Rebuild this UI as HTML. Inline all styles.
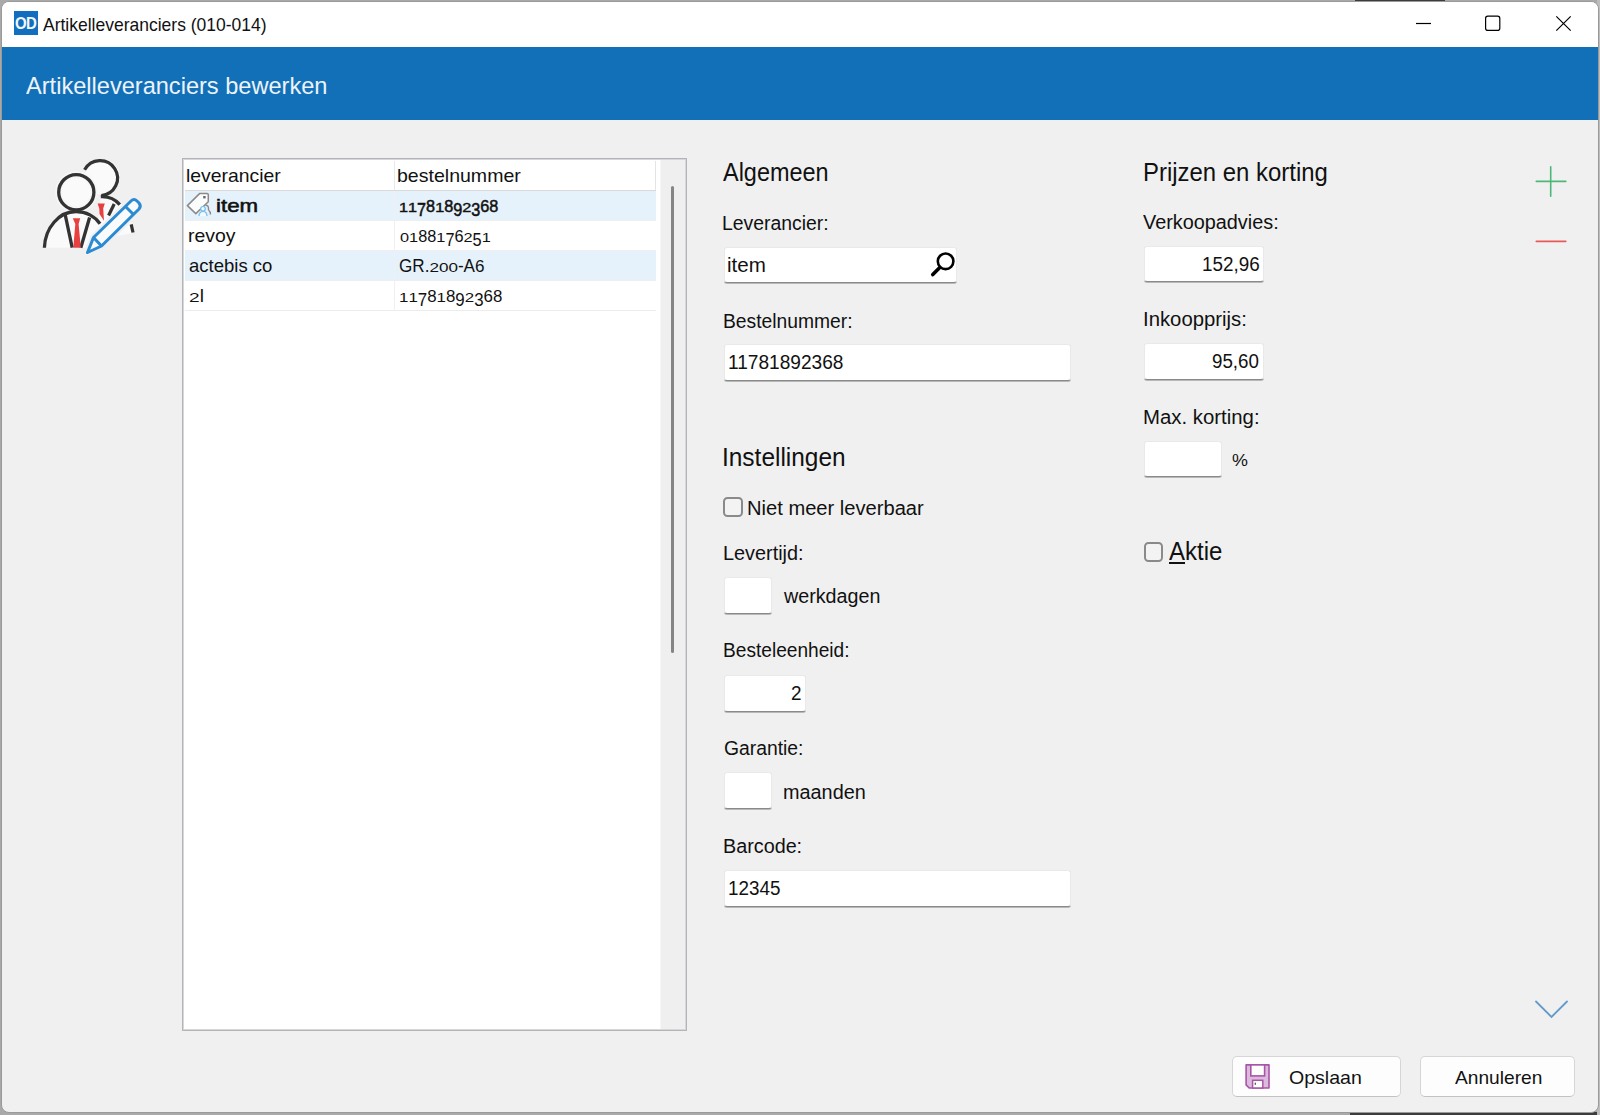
<!DOCTYPE html>
<html><head><meta charset="utf-8"><style>
html,body{margin:0;padding:0;width:1600px;height:1115px;overflow:hidden;background:#a9a9a9;}
*{box-sizing:border-box;}
.t{position:absolute;white-space:nowrap;font-family:'Liberation Sans', sans-serif;transform-origin:0 0;}
.win{position:absolute;left:1px;top:1px;width:1598px;height:1112px;border-radius:8px;background:#f0f0f0;border:1px solid #9a9a9a;overflow:hidden;}
.bar{position:absolute;left:0;top:0;width:100%;height:45px;background:#fff;}
.band{position:absolute;left:0;top:45px;width:100%;height:73px;background:#1270b8;}
.inp{position:absolute;background:#fff;border-radius:3px;border:1px solid #e9e9e9;border-bottom:1px solid #8a8a8a;box-shadow:0 1px 0 #b8b8b8;}
.cb{position:absolute;width:19.5px;height:19.5px;border:2px solid #8a8a8a;border-radius:4.5px;background:#f3f3f3;}
.btn{position:absolute;background:#fdfdfd;border:1px solid #d6d6d6;border-bottom-color:#c2c2c2;border-radius:5px;}
</style></head><body>
<!-- desktop bits -->
<div style="position:absolute;left:1355px;top:0;width:90px;height:2px;background:#3c3c3c"></div>
<div style="position:absolute;left:1350px;top:1112px;width:250px;height:3px;background:#3c3c3c"></div>
<div style="position:absolute;left:1597px;top:0;width:3px;height:1115px;background:#bdbdbd"></div>
<div class="win">
 <div class="bar"></div>
 <div class="band"></div>
</div>
<!-- app icon -->
<div style="position:absolute;left:14px;top:11px;width:24px;height:24px;background:#126fbf;"></div>
<div class="t" style="left:14.6px;top:15.4px;font-size:17px;line-height:18px;font-weight:bold;color:#f4f8fc;letter-spacing:-0.8px;transform:scaleX(0.88)">OD</div>
<!-- window controls -->
<svg style="position:absolute;left:0;top:0" width="1600" height="60">
 <line x1="1416" y1="23.5" x2="1431" y2="23.5" stroke="#000" stroke-width="1.2"/>
 <rect x="1485.6" y="16.2" width="14.2" height="14.2" rx="2.2" fill="none" stroke="#000" stroke-width="1.2"/>
 <path d="M1556.3 16.3 L1570.7 30.7 M1570.7 16.3 L1556.3 30.7" stroke="#000" stroke-width="1.2"/>
</svg>
<!-- big icon -->
<svg style="position:absolute;left:0;top:130px" width="180" height="140" viewBox="0 130 180 140">
 <circle cx="102.5" cy="177" r="17.5" fill="#fafafa"/>
 <path d="M101 196.5 C113 196.5 124 203 129 213 L133.5 233 L96 240 Z" fill="#fafafa"/>
 <g fill="none" stroke="#333" stroke-width="3.2">
  <path d="M84.6 169.8 A17.5 17.5 0 1 1 101.3 195.5"/>
  <path d="M100.8 196.6 C108 196.3 115.5 199.5 119.8 204.6"/>
  <path d="M114.2 204 L108.6 215.5"/>
  <path d="M131.2 224.3 L133 232.5"/>
 </g>
 <path d="M97.6 203.5 L104.8 203.5 L103.2 208.5 L104 220.8 L99.5 214 L99.3 208.5 Z" fill="#e84040"/>
 <circle cx="76.3" cy="192.2" r="17.6" fill="#fafafa" stroke="#f6f6f6" stroke-width="7"/>
 <path d="M44.4 247.7 C45 228 59 211.5 76 211.5 C86 211.5 95 216.5 100 223.8 L104 247.7 Z" fill="#fafafa"/>
 <g fill="none" stroke="#333" stroke-width="3.3">
  <circle cx="76.3" cy="192.2" r="17.6"/>
  <path d="M44.4 247.7 C45 228 59 211.5 76 211.5 C86 211.5 95 216.5 100 223.8"/>
  <path d="M64.8 212.8 L72.2 247.7 M89.6 217.5 L80.8 247.7"/>
 </g>
 <path d="M72.8 218.2 L80.2 218.2 L78.6 224 L80.8 247.7 L73.3 247.7 L75.3 224 Z" fill="#e84040"/>
 <path d="M87.5 252.5 L93.5 237.5 L131 201 Q134 198 137 201 L139 203 Q141.5 206 139 209 L101.5 246 Z" fill="none" stroke="#f0f0f0" stroke-width="7" stroke-linejoin="round"/>
 <g fill="#f8fafc" stroke="#2a8ad2" stroke-width="3" stroke-linejoin="round">
  <path d="M87.5 252.5 L93.5 237.5 L131 201 Q134 198 137 201 L139 203 Q141.5 206 139 209 L101.5 246 Z"/>
  <path d="M93.5 237.5 L101.5 246 M125.5 206.5 L133.5 214.5" fill="none"/>
 </g>
</svg>
<!-- list box -->
<div style="position:absolute;left:182px;top:158px;width:505px;height:873px;border:1px solid #b3b4b8;box-shadow:inset 0 0 0 1px #d6d7da;background:#fff"></div>
<div style="position:absolute;left:660px;top:160px;width:25px;height:869px;background:#efefef;border-left:1px solid #f7f7f7"></div>
<div style="position:absolute;left:671px;top:186px;width:3px;height:467px;background:#858585;border-radius:1.5px"></div>
<div style="position:absolute;left:185px;top:161px;width:471px;height:29px;background:#fff;border-right:1px solid #e4e4e4"></div>
<div style="position:absolute;left:394px;top:161px;width:1px;height:149px;background:#e8e8e8"></div>
<div style="position:absolute;left:185px;top:190px;width:471px;height:1px;background:#dadada"></div>
<div style="position:absolute;left:185px;top:191px;width:471px;height:29px;background:#e5f1fb"></div>
<div style="position:absolute;left:185px;top:220px;width:471px;height:1px;background:#efefef"></div>
<div style="position:absolute;left:185px;top:250px;width:471px;height:1px;background:#efefef"></div>
<div style="position:absolute;left:185px;top:251px;width:471px;height:29px;background:#e5f1fb"></div>
<div style="position:absolute;left:185px;top:280px;width:471px;height:1px;background:#efefef"></div>
<div style="position:absolute;left:185px;top:310px;width:471px;height:1px;background:#ececec"></div>
<div style="position:absolute;left:394px;top:191px;width:1px;height:119px;background:#f0f0f0"></div>
<!-- tag icon -->
<svg style="position:absolute;left:184px;top:190px" width="30" height="30" viewBox="184 190 30 30">
 <path d="M187.4 205.6 L199.8 193.4 L207 193.4 Q208.3 193.4 208.3 194.7 L208.3 201.8 L195.8 213.6 Z" fill="#fcfcfc" stroke="#8a8a8a" stroke-width="1.5" stroke-linejoin="round"/>
 <rect x="203.2" y="196" width="2.4" height="2.4" fill="#666"/>
 <path d="M205.5 205.2 Q208.5 205 208.5 208.5 L208.5 210 M208.5 210 Q210.5 211.5 210.5 214.5" fill="none" stroke="#8a8a8a" stroke-width="1.4"/>
 <circle cx="203" cy="208.8" r="2.3" fill="#f4f9fe" stroke="#74bdec" stroke-width="1.2"/>
 <path d="M199 216 Q199.3 211.5 203 211.5 Q206.7 211.5 207 216" fill="#f4f9fe" stroke="#74bdec" stroke-width="1.2"/>
</svg>
<!-- inputs -->
<div class="inp" style="left:723.5px;top:246.5px;width:233.0px;height:36.5px"></div>
<svg style="position:absolute;left:925px;top:248px" width="32" height="32" viewBox="925 248 32 32">
 <circle cx="945.6" cy="261.3" r="7.8" fill="none" stroke="#000" stroke-width="2.6"/>
 <path d="M939.8 267.5 L932.8 274.6" stroke="#000" stroke-width="3.6" stroke-linecap="round"/>
</svg>
<div class="inp" style="left:723.5px;top:344.0px;width:347.0px;height:37.0px"></div>
<div class="cb" style="left:723.3px;top:497px"></div>
<div class="inp" style="left:723.5px;top:576.5px;width:48.0px;height:37.0px"></div>
<div class="inp" style="left:723.5px;top:674.5px;width:82.5px;height:37.0px"></div>
<div class="inp" style="left:723.5px;top:771.5px;width:48.0px;height:37.5px"></div>
<div class="inp" style="left:723.5px;top:870.0px;width:347.0px;height:36.5px"></div>
<div class="inp" style="left:1143.5px;top:245.5px;width:120.0px;height:36.5px"></div>
<div class="inp" style="left:1143.5px;top:342.5px;width:120.0px;height:37.0px"></div>
<div class="inp" style="left:1143.5px;top:440.5px;width:78.0px;height:36.5px"></div>
<div class="cb" style="left:1143.5px;top:542px"></div>
<!-- plus/minus/chevron -->
<svg style="position:absolute;left:1520px;top:150px" width="60" height="110" viewBox="1520 150 60 110">
 <path d="M1536.3 181.4 L1565.8 181.4 M1550.7 166.8 L1550.7 196.3" stroke="#4ab878" stroke-width="1.6" stroke-linecap="round"/>
 <path d="M1536.3 241.4 L1565.8 241.4" stroke="#e85a5a" stroke-width="1.6" stroke-linecap="round"/>
</svg>
<svg style="position:absolute;left:1525px;top:990px" width="50" height="40" viewBox="1525 990 50 40">
 <path d="M1536 1001.5 L1551.5 1017 L1567 1001.5" fill="none" stroke="#639bcb" stroke-width="1.8" stroke-linecap="round"/>
</svg>
<!-- buttons -->
<div class="btn" style="left:1231.5px;top:1056px;width:169px;height:41px"></div>
<div class="btn" style="left:1420px;top:1056px;width:155px;height:41px"></div>
<svg style="position:absolute;left:1240px;top:1060px" width="34" height="34" viewBox="1240 1060 34 34">
 <path d="M1246.1 1064.9 L1269 1064.9 L1269 1088 L1249.2 1088 L1246.1 1084.9 Z" fill="#dcbadc" stroke="#a855a8" stroke-width="1.6" stroke-linejoin="round"/>
 <rect x="1250.8" y="1064.9" width="13.8" height="11" fill="#fdfffd" stroke="#a855a8" stroke-width="1.6"/>
 <rect x="1252.6" y="1080.3" width="10.2" height="7.7" fill="#fdfffd" stroke="#a855a8" stroke-width="1.5"/>
 <ellipse cx="1255.3" cy="1083.7" rx="0.7" ry="1.2" fill="#555"/>
</svg>
<div class="t" id="t_title" style="left:43.00px;top:13.25px;font-size:19px;line-height:23px;font-weight:normal;color:#111;transform:scaleX(0.9206)">Artikelleveranciers (010-014)</div>
<div class="t" id="t_head" style="left:26.00px;top:71.00px;font-size:24.5px;line-height:29px;font-weight:normal;color:#edf3f9;transform:scaleX(0.9626)">Artikelleveranciers bewerken</div>
<div class="t" id="t_lh1" style="left:186.24px;top:164.00px;font-size:18.5px;line-height:23px;font-weight:normal;color:#111;transform:scaleX(1.0473)">leverancier</div>
<div class="t" id="t_lh2" style="left:396.63px;top:163.80px;font-size:18.5px;line-height:23px;font-weight:normal;color:#111;transform:scaleX(1.0560)">bestelnummer</div>
<div class="t" id="t_r1a" style="left:216.44px;top:194.00px;font-size:18.5px;line-height:23px;font-weight:normal;color:#111;transform:scaleX(1.2046);-webkit-text-stroke:0.55px #111">item</div>
<div class="t" id="t_r1b" style="left:398.50px;top:193.70px;font-size:18.5px;line-height:23px;font-weight:normal;color:#111;transform:scaleX(0.8775);-webkit-text-stroke:0.55px #111"><span style="display:inline-block;transform-origin:50% 18.00px;transform:scaleY(0.68)">1</span><span style="display:inline-block;transform-origin:50% 18.00px;transform:scaleY(0.68)">1</span><span style="display:inline-block;transform-origin:50% 18.00px;transform:translateY(4.2px) scaleY(0.97)">7</span><span style="display:inline-block;transform-origin:50% 18.00px;transform:scaleY(0.93)">8</span><span style="display:inline-block;transform-origin:50% 18.00px;transform:scaleY(0.68)">1</span><span style="display:inline-block;transform-origin:50% 18.00px;transform:scaleY(0.93)">8</span><span style="display:inline-block;transform-origin:50% 18.00px;transform:translateY(4.2px) scaleY(0.97)">9</span><span style="display:inline-block;transform-origin:50% 18.00px;transform:scaleY(0.68)">2</span><span style="display:inline-block;transform-origin:50% 18.00px;transform:translateY(4.2px) scaleY(0.97)">3</span><span style="display:inline-block;transform-origin:50% 18.00px;transform:scaleY(0.93)">6</span><span style="display:inline-block;transform-origin:50% 18.00px;transform:scaleY(0.93)">8</span></div>
<div class="t" id="t_r2a" style="left:188.44px;top:224.20px;font-size:18.5px;line-height:23px;font-weight:normal;color:#111;transform:scaleX(1.0492)">revoy</div>
<div class="t" id="t_r2b" style="left:399.95px;top:223.50px;font-size:18.5px;line-height:23px;font-weight:normal;color:#111;transform:scaleX(0.8815)"><span style="display:inline-block;transform-origin:50% 18.00px;transform:scaleY(0.68)">0</span><span style="display:inline-block;transform-origin:50% 18.00px;transform:scaleY(0.68)">1</span><span style="display:inline-block;transform-origin:50% 18.00px;transform:scaleY(0.93)">8</span><span style="display:inline-block;transform-origin:50% 18.00px;transform:scaleY(0.93)">8</span><span style="display:inline-block;transform-origin:50% 18.00px;transform:scaleY(0.68)">1</span><span style="display:inline-block;transform-origin:50% 18.00px;transform:translateY(4.2px) scaleY(0.97)">7</span><span style="display:inline-block;transform-origin:50% 18.00px;transform:scaleY(0.93)">6</span><span style="display:inline-block;transform-origin:50% 18.00px;transform:scaleY(0.68)">2</span><span style="display:inline-block;transform-origin:50% 18.00px;transform:translateY(4.2px) scaleY(0.97)">5</span><span style="display:inline-block;transform-origin:50% 18.00px;transform:scaleY(0.68)">1</span></div>
<div class="t" id="t_r3a" style="left:189.06px;top:253.60px;font-size:18.5px;line-height:23px;font-weight:normal;color:#111;transform:scaleX(1.0004)">actebis co</div>
<div class="t" id="t_r3b" style="left:398.95px;top:254.00px;font-size:18.5px;line-height:23px;font-weight:normal;color:#111;transform:scaleX(0.9237)">GR.<span style="display:inline-block;transform-origin:50% 18.00px;transform:scaleY(0.68)">2</span><span style="display:inline-block;transform-origin:50% 18.00px;transform:scaleY(0.68)">0</span><span style="display:inline-block;transform-origin:50% 18.00px;transform:scaleY(0.68)">0</span>-A<span style="display:inline-block;transform-origin:50% 18.00px;transform:scaleY(0.93)">6</span></div>
<div class="t" id="t_r4a" style="left:188.65px;top:283.80px;font-size:18.5px;line-height:23px;font-weight:normal;color:#111;transform:scaleX(1.0319)"><span style="display:inline-block;transform-origin:50% 18.00px;transform:scaleY(0.68)">2</span>l</div>
<div class="t" id="t_r4b" style="left:399.25px;top:284.00px;font-size:18.5px;line-height:23px;font-weight:normal;color:#111;transform:scaleX(0.9122)"><span style="display:inline-block;transform-origin:50% 18.00px;transform:scaleY(0.68)">1</span><span style="display:inline-block;transform-origin:50% 18.00px;transform:scaleY(0.68)">1</span><span style="display:inline-block;transform-origin:50% 18.00px;transform:translateY(4.2px) scaleY(0.97)">7</span><span style="display:inline-block;transform-origin:50% 18.00px;transform:scaleY(0.93)">8</span><span style="display:inline-block;transform-origin:50% 18.00px;transform:scaleY(0.68)">1</span><span style="display:inline-block;transform-origin:50% 18.00px;transform:scaleY(0.93)">8</span><span style="display:inline-block;transform-origin:50% 18.00px;transform:translateY(4.2px) scaleY(0.97)">9</span><span style="display:inline-block;transform-origin:50% 18.00px;transform:scaleY(0.68)">2</span><span style="display:inline-block;transform-origin:50% 18.00px;transform:translateY(4.2px) scaleY(0.97)">3</span><span style="display:inline-block;transform-origin:50% 18.00px;transform:scaleY(0.93)">6</span><span style="display:inline-block;transform-origin:50% 18.00px;transform:scaleY(0.93)">8</span></div>
<div class="t" id="h1" style="left:723.30px;top:156.50px;font-size:26px;line-height:30px;font-weight:normal;color:#111;transform:scaleX(0.9026)">Algemeen</div>
<div class="t" id="l1" style="left:721.95px;top:211.00px;font-size:19.5px;line-height:24px;font-weight:normal;color:#111;transform:scaleX(0.9939)">Leverancier:</div>
<div class="t" id="v1" style="left:727.06px;top:253.00px;font-size:19.5px;line-height:24px;font-weight:normal;color:#111;transform:scaleX(1.0549)">item</div>
<div class="t" id="l2" style="left:722.86px;top:308.50px;font-size:19.5px;line-height:24px;font-weight:normal;color:#111;transform:scaleX(0.9881)">Bestelnummer:</div>
<div class="t" id="v2" style="left:727.87px;top:349.75px;font-size:19.5px;line-height:24px;font-weight:normal;color:#111;transform:scaleX(0.9797)">11781892368</div>
<div class="t" id="h2" style="left:722.40px;top:442.00px;font-size:26px;line-height:30px;font-weight:normal;color:#111;transform:scaleX(0.9396)">Instellingen</div>
<div class="t" id="c1" style="left:747.39px;top:495.80px;font-size:19.5px;line-height:24px;font-weight:normal;color:#111;transform:scaleX(1.0321)">Niet meer leverbaar</div>
<div class="t" id="l3" style="left:722.91px;top:541.20px;font-size:19.5px;line-height:24px;font-weight:normal;color:#111;transform:scaleX(1.0177)">Levertijd:</div>
<div class="t" id="s1" style="left:783.90px;top:584.40px;font-size:19.5px;line-height:24px;font-weight:normal;color:#111;transform:scaleX(1.0108)">werkdagen</div>
<div class="t" id="l4" style="left:722.87px;top:638.40px;font-size:19.5px;line-height:24px;font-weight:normal;color:#111;transform:scaleX(0.9803)">Besteleenheid:</div>
<div class="t" id="v3" style="left:790.75px;top:680.80px;font-size:19.5px;line-height:24px;font-weight:normal;color:#111;transform:scaleX(0.9699)">2</div>
<div class="t" id="l5" style="left:723.73px;top:736.00px;font-size:19.5px;line-height:24px;font-weight:normal;color:#111;transform:scaleX(0.9908)">Garantie:</div>
<div class="t" id="s2" style="left:782.71px;top:779.60px;font-size:19.5px;line-height:24px;font-weight:normal;color:#111;transform:scaleX(1.0180)">maanden</div>
<div class="t" id="l6" style="left:722.92px;top:833.70px;font-size:19.5px;line-height:24px;font-weight:normal;color:#111;transform:scaleX(1.0136)">Barcode:</div>
<div class="t" id="v4" style="left:727.99px;top:875.70px;font-size:19.5px;line-height:24px;font-weight:normal;color:#111;transform:scaleX(0.9659)">12345</div>
<div class="t" id="h3" style="left:1143.49px;top:156.80px;font-size:26px;line-height:30px;font-weight:normal;color:#111;transform:scaleX(0.9204)">Prijzen en korting</div>
<div class="t" id="l7" style="left:1143.00px;top:209.50px;font-size:19.5px;line-height:24px;font-weight:normal;color:#111;transform:scaleX(1.0173)">Verkoopadvies:</div>
<div class="t" id="v5" style="left:1201.89px;top:251.50px;font-size:19.5px;line-height:24px;font-weight:normal;color:#111;transform:scaleX(0.9679)">152,96</div>
<div class="t" id="l8" style="left:1142.87px;top:306.80px;font-size:19.5px;line-height:24px;font-weight:normal;color:#111;transform:scaleX(1.0412)">Inkoopprijs:</div>
<div class="t" id="v6" style="left:1212.36px;top:349.10px;font-size:19.5px;line-height:24px;font-weight:normal;color:#111;transform:scaleX(0.9618)">95,60</div>
<div class="t" id="l9" style="left:1143.07px;top:404.50px;font-size:19.5px;line-height:24px;font-weight:normal;color:#111;transform:scaleX(1.0441)">Max. korting:</div>
<div class="t" id="s3" style="left:1231.98px;top:450.80px;font-size:16px;line-height:20px;font-weight:normal;color:#111;transform:scaleX(1.1188)">%</div>
<div class="t" id="c2" style="left:1169.30px;top:536.30px;font-size:25.5px;line-height:30px;font-weight:normal;color:#111;transform:scaleX(0.9408)"><span style="text-decoration:underline;text-underline-offset:2px;text-decoration-thickness:1.5px">A</span>ktie</div>
<div class="t" id="b1" style="left:1289.02px;top:1066.25px;font-size:19px;line-height:23px;font-weight:normal;color:#111;transform:scaleX(1.0293)">Opslaan</div>
<div class="t" id="b2" style="left:1454.50px;top:1065.75px;font-size:19px;line-height:23px;font-weight:normal;color:#111;transform:scaleX(1.0081)">Annuleren</div>
</body></html>
